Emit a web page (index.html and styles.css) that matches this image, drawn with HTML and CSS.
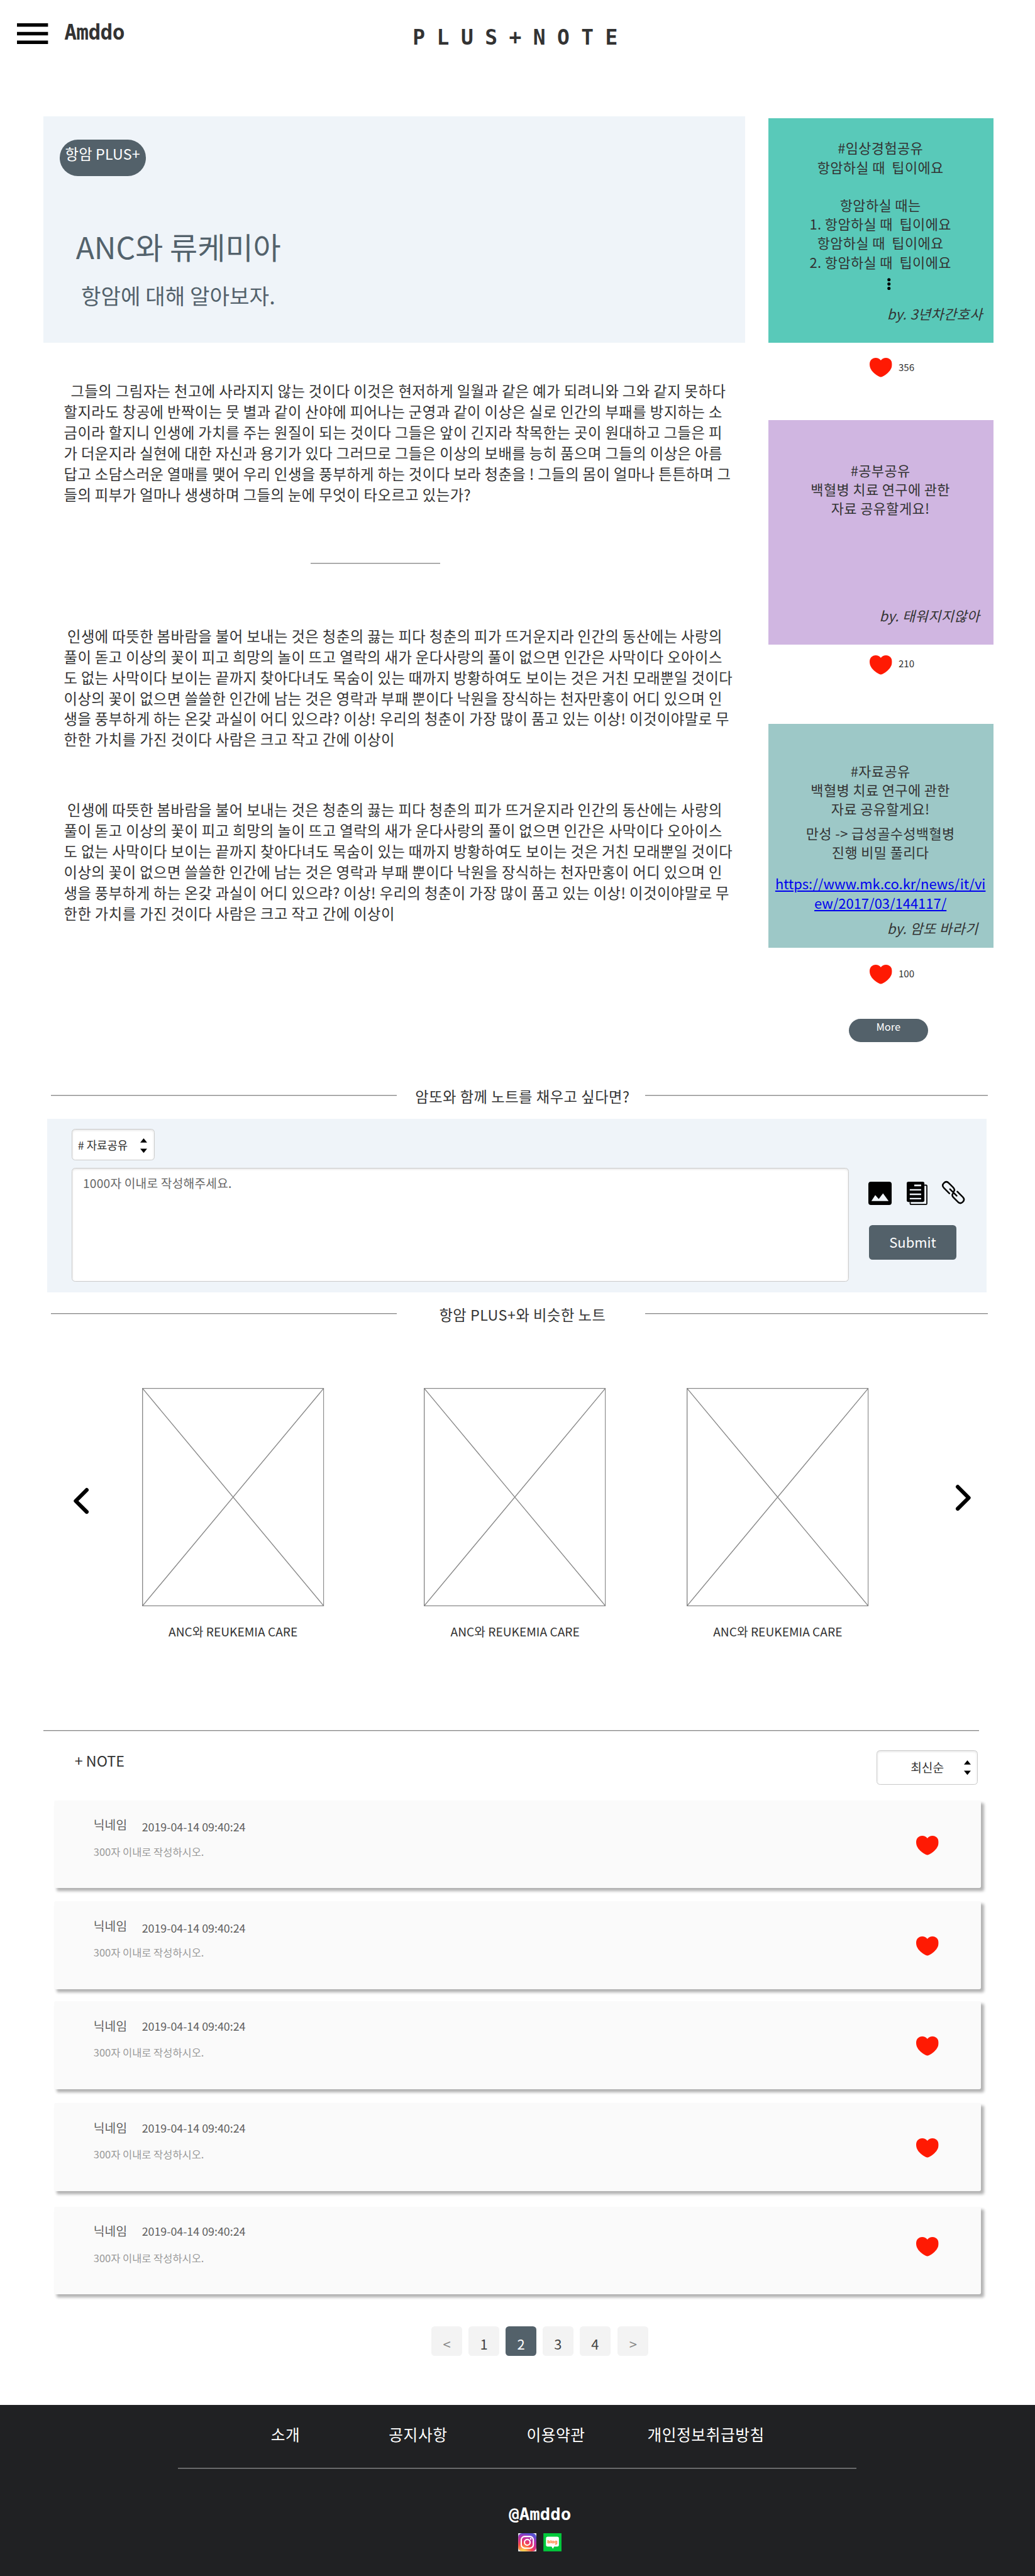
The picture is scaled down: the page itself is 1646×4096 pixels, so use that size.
FILE: index.html
```html
<!DOCTYPE html>
<html lang="ko">
<head>
<meta charset="utf-8">
<title>Amddo - PLUS+NOTE</title>
<link rel="stylesheet" href="styles.css">
</head>
<body>
<svg class="defs" width="0" height="0" aria-hidden="true">
  <symbol id="heart" viewBox="0 0 52 45"><path fill="#ff1a03" d="M26 6C29 2 33 0 38 0c8 0 14 6 14 15 0 9-5 16-12 22-5 4-10 7-14 8-4-1-9-4-14-8C5 31 0 24 0 15 0 6 6 0 14 0c5 0 9 2 12 6z"/></symbol>
  <symbol id="frame" viewBox="0 0 422 506"><path fill="none" stroke="#888" stroke-width="2" d="M1 1h420v504H1zM1 1l420 504M421 1L1 505"/></symbol>
  <symbol id="updown" viewBox="0 0 16 34"><path d="M8 0l8 10H0zM8 34l8-10H0z"/></symbol>
</svg>

<header class="header">
  <svg class="menu" viewBox="0 0 72 48"><path d="M0 0h72v8H0zM0 20h72v8H0zM0 40h72v8H0z"/></svg>
  <div class="logo">Amddo</div>
  <h1 class="brand">P L U S + N O T E</h1>
</header>

<div class="top">
  <article class="article">
    <div class="hero">
      <span class="tag">항암 PLUS+</span>
      <h2 class="hero-title">ANC와 류케미아</h2>
      <p class="hero-sub">항암에 대해 알아보자.</p>
    </div>
    <p class="para para-first">  그들의 그림자는 천고에 사라지지 않는 것이다 이것은 현저하게 일월과 같은 예가 되려니와 그와 같지 못하다
할지라도 창공에 반짝이는 뭇 별과 같이 산야에 피어나는 군영과 같이 이상은 실로 인간의 부패를 방지하는 소
금이라 할지니 인생에 가치를 주는 원질이 되는 것이다 그들은 앞이 긴지라 착목한는 곳이 원대하고 그들은 피
가 더운지라 실현에 대한 자신과 용기가 있다 그러므로 그들은 이상의 보배를 능히 품으며 그들의 이상은 아름
답고 소담스러운 열매를 맺어 우리 인생을 풍부하게 하는 것이다 보라 청춘을 ! 그들의 몸이 얼마나 튼튼하며 그
들의 피부가 얼마나 생생하며 그들의 눈에 무엇이 타오르고 있는가?</p>
    <div class="divider"></div>
    <p class="para para-second"> 인생에 따뜻한 봄바람을 불어 보내는 것은 청춘의 끓는 피다 청춘의 피가 뜨거운지라 인간의 동산에는 사랑의
풀이 돋고 이상의 꽃이 피고 희망의 놀이 뜨고 열락의 새가 운다사랑의 풀이 없으면 인간은 사막이다 오아이스
도 없는 사막이다 보이는 끝까지 찾아다녀도 목숨이 있는 때까지 방황하여도 보이는 것은 거친 모래뿐일 것이다
이상의 꽃이 없으면 쓸쓸한 인간에 남는 것은 영락과 부패 뿐이다 낙원을 장식하는 천자만홍이 어디 있으며 인
생을 풍부하게 하는 온갖 과실이 어디 있으랴? 이상! 우리의 청춘이 가장 많이 품고 있는 이상! 이것이야말로 무
한한 가치를 가진 것이다 사람은 크고 작고 간에 이상이</p>
    <p class="para para-third"> 인생에 따뜻한 봄바람을 불어 보내는 것은 청춘의 끓는 피다 청춘의 피가 뜨거운지라 인간의 동산에는 사랑의
풀이 돋고 이상의 꽃이 피고 희망의 놀이 뜨고 열락의 새가 운다사랑의 풀이 없으면 인간은 사막이다 오아이스
도 없는 사막이다 보이는 끝까지 찾아다녀도 목숨이 있는 때까지 방황하여도 보이는 것은 거친 모래뿐일 것이다
이상의 꽃이 없으면 쓸쓸한 인간에 남는 것은 영락과 부패 뿐이다 낙원을 장식하는 천자만홍이 어디 있으며 인
생을 풍부하게 하는 온갖 과실이 어디 있으랴? 이상! 우리의 청춘이 가장 많이 품고 있는 이상! 이것이야말로 무
한한 가치를 가진 것이다 사람은 크고 작고 간에 이상이</p>
  </article>

  <aside class="aside">
    <section class="memo memo-green">
      <p class="memo-text">#임상경험공유
항암하실 때  팁이에요

항암하실 때는
1. 항암하실 때  팁이에요
항암하실 때  팁이에요
2. 항암하실 때  팁이에요</p>
      <svg class="dots" viewBox="0 0 8 28"><circle cx="4" cy="4" r="3.7"/><circle cx="4" cy="14" r="3.7"/><circle cx="4" cy="24" r="3.7"/></svg>
      <p class="by">by. 3년차간호사</p>
    </section>
    <div class="like like-1"><svg class="heart"><use href="#heart"/></svg><span>356</span></div>
    <section class="memo memo-purple">
      <p class="memo-text">#공부공유
백혈병 치료 연구에 관한
자료 공유할게요!</p>
      <p class="by">by. 태워지지않아</p>
    </section>
    <div class="like like-2"><svg class="heart"><use href="#heart"/></svg><span>210</span></div>
    <section class="memo memo-teal">
      <p class="memo-text">#자료공유
백혈병 치료 연구에 관한
자료 공유할게요!</p>
      <p class="memo-text memo-note">만성 -&gt; 급성골수성백혈병
진행 비밀 풀리다</p>
      <a class="memo-link">https://www.mk.co.kr/news/it/vi
ew/2017/03/144117/</a>
      <p class="by">by. 암또 바라기</p>
    </section>
    <div class="like like-3"><svg class="heart"><use href="#heart"/></svg><span>100</span></div>
    <div class="more">More</div>
  </aside>
</div>

<div class="section-head">
  <span class="line line-left"></span><h3 class="section-title">암또와 함께 노트를 채우고 싶다면?</h3><span class="line line-right"></span>
</div>

<section class="write">
  <div class="select select-topic"><span># 자료공유</span><svg class="updown"><use href="#updown"/></svg></div>
  <div class="write-row">
    <div class="textarea">1000자 이내로 작성해주세요.</div>
    <div class="tools">
      <div class="tool-icons">
        <svg class="icon icon-image" viewBox="0 0 54 54"><path fill-rule="evenodd" d="M6 0h42q6 0 6 6v42q0 6-6 6H6q-6 0-6-6V6q0-6 6-6zM7 45h40L34 27 24 40l-8-9z"/></svg>
        <svg class="icon icon-doc" viewBox="0 0 48 54"><path fill-rule="evenodd" d="M4 0h33q4 0 4 4v39q0 4-4 4H4q-4 0-4-4V4Q0 0 4 0zM17.500 6.500v4h16v-4zM7 17v3.500h26.500V17zM7 27.500V31h26.500v-3.500zM7 37.500v3.200h26.500v-3.200z"/><path fill="none" stroke="#000" stroke-width="2.600" d="M41 8h4q1.700 0 1.700 2v40.500q0 2.200-2.200 2.200H10q-2 0-2-2V47"/></svg>
        <svg class="icon icon-link" viewBox="0 0 50 50"><g transform="rotate(45 25 25)" fill="none" stroke="#000" stroke-width="3.600" stroke-linecap="round"><path d="M20 33H2q-8 0-8-8t8-8h14q8 0 8 6"/><path d="M30 17h18q8 0 8 8t-8 8H34q-8 0-8-6"/><path d="M14 25h22"/></g></svg>
      </div>
      <div class="submit">Submit</div>
    </div>
  </div>
</section>

<div class="section-head section-head-2">
  <span class="line line-left"></span><h3 class="section-title">항암 PLUS+와 비슷한 노트</h3><span class="line line-right"></span>
</div>

<section class="carousel">
  <svg class="arrow arrow-prev" viewBox="0 0 35 60"><path d="M30.500 4.500L5 30l25.500 25.500"/></svg>
  <figure class="card"><svg class="frame"><use href="#frame"/></svg><figcaption>ANC와 REUKEMIA CARE</figcaption></figure>
  <figure class="card card-2"><svg class="frame"><use href="#frame"/></svg><figcaption>ANC와 REUKEMIA CARE</figcaption></figure>
  <figure class="card card-3"><svg class="frame"><use href="#frame"/></svg><figcaption>ANC와 REUKEMIA CARE</figcaption></figure>
  <svg class="arrow arrow-next" viewBox="0 0 35 60"><path d="M4.500 4.500L30 30 4.500 55.500"/></svg>
</section>

<section class="notes">
  <div class="notes-line"></div>
  <div class="notes-head">
    <h3 class="notes-title">+ NOTE</h3>
    <div class="select select-sort"><span>최신순</span><svg class="updown"><use href="#updown"/></svg></div>
  </div>
  <div class="note note-low"><div><p class="meta"><span class="nick">닉네임</span><span class="date">2019-04-14 09:40:24</span></p><p class="hint">300자 이내로 작성하시오.</p></div><svg class="heart"><use href="#heart"/></svg></div>
  <div class="note note-low note-2"><div><p class="meta"><span class="nick">닉네임</span><span class="date">2019-04-14 09:40:24</span></p><p class="hint">300자 이내로 작성하시오.</p></div><svg class="heart"><use href="#heart"/></svg></div>
  <div class="note note-3"><div><p class="meta"><span class="nick">닉네임</span><span class="date">2019-04-14 09:40:24</span></p><p class="hint">300자 이내로 작성하시오.</p></div><svg class="heart"><use href="#heart"/></svg></div>
  <div class="note note-4"><div><p class="meta"><span class="nick">닉네임</span><span class="date">2019-04-14 09:40:24</span></p><p class="hint">300자 이내로 작성하시오.</p></div><svg class="heart"><use href="#heart"/></svg></div>
  <div class="note note-5"><div><p class="meta"><span class="nick">닉네임</span><span class="date">2019-04-14 09:40:24</span></p><p class="hint">300자 이내로 작성하시오.</p></div><svg class="heart"><use href="#heart"/></svg></div>
</section>

<nav class="pages">
  <span class="page page-step">&lt;</span><span class="page">1</span><span class="page page-on">2</span><span class="page">3</span><span class="page">4</span><span class="page page-step page-next">&gt;</span>
</nav>

<footer class="footer">
  <nav class="links"><span>소개</span><span class="l2">공지사항</span><span class="l3">이용약관</span><span class="l4">개인정보취급방침</span></nav>
  <div class="footer-line"></div>
  <div class="footer-logo">@Amddo</div>
  <div class="social">
    <svg viewBox="0 0 42 42">
      <defs>
        <radialGradient id="ig" cx="0.270" cy="1.050" r="1.050"><stop offset="0" stop-color="#ffd850"/><stop offset="0.150" stop-color="#ffc24a"/><stop offset="0.450" stop-color="#fb4a45"/><stop offset="0.680" stop-color="#d42f8c"/><stop offset="0.900" stop-color="#9a37bd"/><stop offset="1" stop-color="#5a50d0"/></radialGradient>
      </defs>
      <path fill="#fff" d="M0 0h42v42H0z"/><rect width="42" height="42" rx="9" fill="url(#ig)"/>
      <g fill="none" stroke="#fff" stroke-width="3"><rect x="7" y="7.500" width="28" height="27" rx="8"/><circle cx="21" cy="21" r="6.600"/></g><circle cx="29" cy="13" r="1.900" fill="#fff"/>
    </svg>
    <svg viewBox="0 0 42 42"><path fill="#03c93c" d="M0 0h42v42H0z"/><path fill="#fff" d="M10 8h22q4 0 4 4v15q0 4-4 4h-7l-3 5-3-5h-9q-4 0-4-4V12q0-4 4-4z"/><text x="21" y="23" text-anchor="middle" class="blog">blog</text></svg>
  </div>
</footer>
</body>
</html>
```
FILE: styles.css
```css
/* 1rem is one hundred design units on a 2400-unit wide canvas */
html { font-size: 68.585px; }
* { box-sizing: border-box; margin: 0; padding: 0; }
body {
  width: 24rem;
  background: #fff;
  color: #333;
  font-family: "Noto Sans CJK JP", "Noto Sans CJK KR", sans-serif;
  font-weight: 400;
  font-feature-settings: "calt" 0, "locl" 0;
  overflow-x: hidden;
}
h1, h2, h3 { font-weight: 400; }
svg { display: block; flex: none; overflow: visible; }
.defs { position: absolute; }

.header { display: flex; height: 2.7rem; align-items: flex-start; font-family: "DejaVu Sans Mono", monospace; letter-spacing: -.0098rem; }
.menu { width: .72rem; height: .48rem; margin: .54rem 0 0 .4rem; }
.logo { margin: .525rem 0 0 .37rem; width: 8.08rem; font-size: .48rem; font-weight: 700; line-height: .48rem; }
.brand { margin-top: .635rem; font-size: .48rem; font-weight: 700; line-height: .48rem; white-space: nowrap; }

.top { display: flex; gap: .54rem; margin: 0 .96rem 1.04rem 1rem; }
.article { width: 16.28rem; }
.hero { display: flex; flex-direction: column; align-items: flex-start; height: 5.24rem; padding-top: .54rem; background: #eff4f9; color: #53626c; }
.tag { width: 2rem; height: .84rem; margin-left: .38rem; padding-top: .08rem; border-radius: .42rem; background: #53616a; color: #fff; font-size: .34rem; line-height: .48rem; letter-spacing: .002rem; text-align: center; white-space: nowrap; }
.hero-title { margin: 1.12rem 0 0 .76rem; font-size: .7rem; line-height: 1rem; }
.hero-sub { margin: .29rem 0 0 .88rem; font-size: .5rem; line-height: .72rem; }
.para { margin-left: .48rem; font-size: .34rem; line-height: .48rem; letter-spacing: .0072rem; word-spacing: -.003rem; white-space: pre; }
.para-first { margin-top: .885rem; }
.divider { width: 3rem; height: 1px; margin: 1.345rem 0 0 6.2rem; background: #888; box-shadow: 0 1px #d3d3d3; }
.para-second { margin-top: 1.44rem; }
.para-third { margin-top: 1.154rem; }

.aside { width: 5.22rem; padding-top: .04rem; }
.memo { display: flex; flex-direction: column; height: 5.2rem; font-size: .32rem; line-height: .44rem; letter-spacing: .0056rem; white-space: pre; }
.memo-text { padding-right: .03rem; text-align: center; }
.memo-green { padding-top: .475rem; background: #59c9b9; }
.memo-green .memo-text { height: 3.08rem; }
.memo-purple { margin-top: .99rem; padding-top: .945rem; background: #d0b6e1; }
.memo-teal { margin-top: 1.13rem; padding-top: .875rem; background: #9dc8c7; }
.memo-note { margin-top: .12rem; }
.memo-link { margin-top: .3rem; padding-right: .03rem; color: #00e; text-align: center; text-decoration: underline; letter-spacing: 0; }
.dots { width: .08rem; height: .28rem; margin: .145rem 0 0 2.75rem; }
.by { margin: .335rem 0 0 2.75rem; font-style: italic; }
.memo-purple .by { margin: 2.05rem 0 0 2.57rem; }
.memo-teal .by { margin-top: .145rem; }
.heart { width: .52rem; height: .45rem; }
.like { display: flex; align-items: center; height: .45rem; margin: .36rem 0 0 2.34rem; gap: .155rem; font-size: .22rem; line-height: .32rem; }
.like span { margin-top: -.02rem; }
.like-2 { margin-top: .26rem; }
.like-2 span { margin-top: -.08rem; }
.like-3 { margin-top: .38rem; }
.more { width: 1.84rem; height: .54rem; margin: .81rem 0 0 1.86rem; border-radius: .27rem; background: #53616a; color: #fff; font-size: .24rem; line-height: .36rem; text-align: center; }

.section-head { display: flex; align-items: center; height: .39rem; margin: 0 1.1rem 0 1.18rem; }
.line { height: 1px; background: #888; box-shadow: 0 1px #d3d3d3; }
.line-left { width: 8.02rem; }
.line-right { width: 7.94rem; }
.section-title { flex: 1; padding: .06rem 0 0 .07rem; font-size: .34rem; line-height: .4rem; letter-spacing: .0072rem; text-align: center; white-space: nowrap; }
.section-head-2 { margin-top: .305rem; }

.write { width: 21.78rem; height: 4.02rem; margin: .35rem 0 0 1.1rem; padding: .24rem 0 0 .56rem; background: #eff4f9; }
.select { display: flex; align-items: center; justify-content: space-between; border: .02rem solid #ccc; border-radius: .08rem; background: #fff; box-shadow: inset 0 .02rem .05rem rgba(0, 0, 0, .12); }
.select span { padding-top: .02rem; }
.select-topic { width: 1.92rem; height: .72rem; padding: 0 .15rem 0 .13rem; font-size: .26rem; line-height: .4rem; }
.updown { width: .16rem; height: .34rem; margin-top: .04rem; }
.write-row { display: flex; margin-top: .18rem; }
.textarea { width: 18.02rem; height: 2.64rem; padding: .145rem .25rem; border: .02rem solid #ccc; border-radius: .08rem; background: #fff; box-shadow: inset 0 .02rem .05rem rgba(0, 0, 0, .12); color: #666; font-size: .28rem; line-height: .4rem; letter-spacing: .003rem; }
.tools { padding: .32rem 0 0 .46rem; }
.tool-icons { display: flex; align-items: flex-start; height: 1rem; }
.icon-image { width: .54rem; height: .54rem; }
.icon-doc { width: .48rem; height: .54rem; margin-left: .35rem; }
.icon-link { width: .5rem; height: .5rem; margin-left: .35rem; }
.submit { width: 2.02rem; height: .8rem; margin-left: .015rem; border-radius: .08rem; background: #53616a; color: #fff; font-size: .32rem; line-height: .79rem; text-align: center; }

.carousel { display: flex; align-items: flex-start; margin-top: 1.525rem; }
.arrow { width: .35rem; height: .6rem; fill: none; stroke: #000; stroke-width: 9; stroke-linecap: round; stroke-linejoin: round; }
.arrow-prev { margin: 2.32rem 1.235rem 0 1.71rem; }
.arrow-next { margin: 2.24rem 0 0 2.015rem; }
.card { width: 4.22rem; }
.card-2 { margin-left: 2.32rem; }
.card-3 { margin-left: 1.87rem; }
.frame { width: 4.22rem; height: 5.06rem; }
.card figcaption { margin-top: .39rem; font-size: .28rem; line-height: .4rem; text-align: center; white-space: nowrap; }

.notes { margin: 2.08rem 1.3rem 0 1rem; }
.notes-line { height: 1px; background: #888; box-shadow: 0 1px #d3d3d3; }
.notes-head { display: flex; justify-content: space-between; height: 1.16rem; margin-top: .455rem; padding: 0 .03rem 0 .73rem; }
.notes-title { font-size: .34rem; line-height: .48rem; }
.select-sort { width: 2.35rem; height: .8rem; padding: 0 .14rem 0 .78rem; font-size: .28rem; line-height: .4rem; }
.select-sort .updown { margin-top: .02rem; }
.note { display: flex; justify-content: space-between; width: 21.48rem; height: 2.04rem; margin-left: .26rem; padding: 0 .98rem 0 .91rem; border-radius: .04rem; background: #fafafa; box-shadow: .06rem .06rem .06rem rgba(0, 0, 0, .3); color: #606060; }
.note-2 { margin-top: .3rem; }
.note-3 { margin-top: .28rem; }
.note-4 { margin-top: .32rem; }
.note-5 { margin-top: .36rem; }
.meta { display: flex; padding-top: .375rem; font-size: .28rem; line-height: .4rem; letter-spacing: .002rem; }
.nick { width: 1.12rem; }
.date { font-size: .26rem; letter-spacing: 0; }
.note-low .date { padding-top: .045rem; }
.note-low .meta { height: .775rem; }
.hint { margin-top: .22rem; color: #999; font-size: .24rem; line-height: .4rem; }
.note .heart { margin-top: .82rem; }
.note-5 .heart { margin-top: .71rem; }

.pages { display: flex; gap: .14rem; margin: .74rem 0 0 10rem; font-size: .32rem; line-height: .56rem; color: #444; }
.page { width: .72rem; height: .68rem; padding-top: .135rem; border-radius: .08rem; background: #f3f3f3; text-align: center; }
.page-step { color: #888; }
.page-next { margin-left: .02rem; }
.page-on { background: #53616a; color: #fff; }

.footer { height: 3.96rem; margin-top: 1.14rem; padding-top: .44rem; background: #202123; color: #fff; }
.links { display: flex; padding-left: 6.28rem; font-size: .36rem; line-height: .48rem; letter-spacing: .0088rem; white-space: nowrap; }
.l2 { margin-left: 2.055rem; }
.l3 { margin-left: 1.835rem; }
.l4 { margin-left: 1.44rem; }
.footer-line { width: 15.74rem; height: 1px; margin: .54rem 0 0 4.12rem; background: #888; box-shadow: 0 1px #464749; }
.footer-logo { margin: .835rem 0 0 11.8rem; font-family: "DejaVu Sans Mono", monospace; font-size: .4rem; font-weight: 700; line-height: .48rem; }
.social { display: flex; gap: .15rem; margin: .18rem 0 0 12.02rem; }
.social svg { width: .425rem; height: .42rem; }
.blog { fill: #f60; font-family: "Liberation Sans", sans-serif; font-size: 11px; font-weight: 700; }
```
